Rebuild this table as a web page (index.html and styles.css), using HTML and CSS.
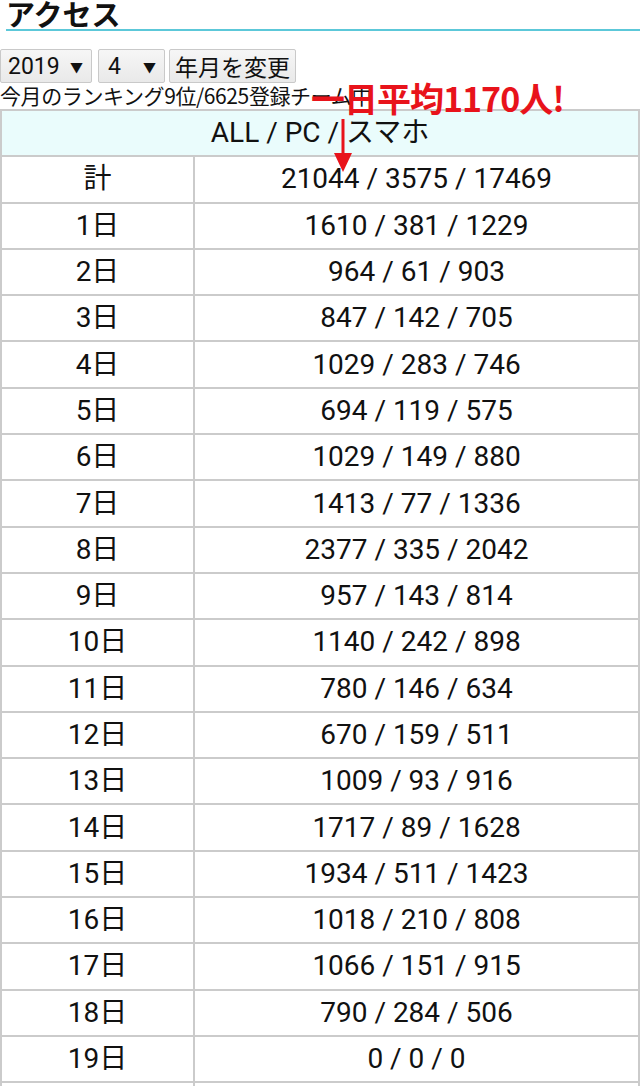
FILE: index.html
```html
<!DOCTYPE html>
<html lang="ja">
<head>
<meta charset="utf-8">
<title>アクセス</title>
<link rel="stylesheet" href="styles.css">
</head>
<body>
<div class="page">
  <h2 class="title">アクセス</h2>
  <form class="controls">
    <div class="sel sel-year"><span>2019</span><span class="arr">▼</span></div>
    <div class="sel sel-month"><span>4</span><span class="arr">▼</span></div>
    <button type="button" class="btn">年月を変更</button>
  </form>
  <div class="rank">今月のランキング9位/6625登録チーム中</div>
  <div class="note">
    <span class="note-text">一日平均1170人!</span>
    <svg class="note-arrow" width="20" height="54" viewBox="0 0 20 54"><rect x="8.5" y="0" width="3" height="38" fill="#e8131b"/><polygon points="1,34 19,34 10,53" fill="#e8131b"/></svg>
  </div>
  <table class="stats">
    <colgroup><col class="c1"><col class="c2"></colgroup>
    <thead><tr><th colspan="2">ALL / PC / スマホ</th></tr></thead>
    <tbody>
      <tr><td>計</td><td>21044 / 3575 / 17469</td></tr>
      <tr><td>1日</td><td>1610 / 381 / 1229</td></tr>
      <tr><td>2日</td><td>964 / 61 / 903</td></tr>
      <tr><td>3日</td><td>847 / 142 / 705</td></tr>
      <tr><td>4日</td><td>1029 / 283 / 746</td></tr>
      <tr><td>5日</td><td>694 / 119 / 575</td></tr>
      <tr><td>6日</td><td>1029 / 149 / 880</td></tr>
      <tr><td>7日</td><td>1413 / 77 / 1336</td></tr>
      <tr><td>8日</td><td>2377 / 335 / 2042</td></tr>
      <tr><td>9日</td><td>957 / 143 / 814</td></tr>
      <tr><td>10日</td><td>1140 / 242 / 898</td></tr>
      <tr><td>11日</td><td>780 / 146 / 634</td></tr>
      <tr><td>12日</td><td>670 / 159 / 511</td></tr>
      <tr><td>13日</td><td>1009 / 93 / 916</td></tr>
      <tr><td>14日</td><td>1717 / 89 / 1628</td></tr>
      <tr><td>15日</td><td>1934 / 511 / 1423</td></tr>
      <tr><td>16日</td><td>1018 / 210 / 808</td></tr>
      <tr><td>17日</td><td>1066 / 151 / 915</td></tr>
      <tr><td>18日</td><td>790 / 284 / 506</td></tr>
      <tr><td>19日</td><td>0 / 0 / 0</td></tr>
      <tr><td>20日</td><td>0 / 0 / 0</td></tr>
    </tbody>
  </table>
</div>
</body>
</html>
```

FILE: styles.css
```css
html, body {
  margin: 0;
  padding: 0;
  background: #fff;
  overflow: hidden;
}
body {
  font-family: Roboto, "Noto Sans CJK JP", sans-serif;
  color: #111;
}
.page {
  position: relative;
  width: 640px;
}
.title {
  margin: -5px 0 0 6px;
  padding: 0;
  font-family: "Noto Sans CJK JP", sans-serif;
  font-weight: 700;
  font-size: 29px;
  line-height: 36px;
  height: 36px;
  border-bottom: 2px solid #5cc8d9;
  box-sizing: border-box;
}
.controls {
  display: flex;
  gap: 5px;
  margin: 18px 0 0 0;
  height: 34px;
}
.sel, .btn {
  display: flex;
  align-items: center;
  box-sizing: border-box;
  height: 34px;
  border: 1px solid #c9c9c9;
  border-radius: 2px;
  background: linear-gradient(#f6f6f6, #e9e9e9);
  font-family: Roboto, "Noto Sans CJK JP", sans-serif;
  font-size: 23px;
  color: #111;
}
.sel-year {
  width: 92px;
  padding-left: 7px;
}
.sel-month {
  width: 67px;
  padding-left: 9px;
  margin-left: 1px;
}
.arr {
  font-size: 13px;
  margin-left: auto;
  margin-right: 8px;
}
.btn {
  width: 127px;
  padding: 0 4px;
  margin-left: -1px;
  font-family: "Noto Sans CJK JP", sans-serif;
  font-size: 23px;
  justify-content: center;
}
.rank {
  font-family: "Noto Sans CJK JP", sans-serif;
  font-size: 21px;
  line-height: 26px;
  height: 26px;
  margin-top: -1px;
  letter-spacing: -0.4px;
  white-space: nowrap;
}
.note {
  position: absolute;
  left: 311px;
  top: 80px;
  display: flex;
  flex-direction: column;
  z-index: 2;
}
.note-text {
  font-family: "Noto Sans CJK JP", sans-serif;
  font-weight: 700;
  font-size: 34px;
  line-height: 46px;
  color: #e8131b;
  letter-spacing: -1px;
  white-space: nowrap;
}
.note-arrow {
  margin-left: 22px;
  margin-top: -2px;
}
.stats {
  width: 640px;
  border-collapse: collapse;
  margin-top: 1px;
  font-size: 28px;
  table-layout: fixed;
}
.c1 { width: 193px; }
.c2 { width: auto; }
.stats th, .stats td {
  border: 2px solid #cbcbcb;
  height: 46.3px;
  box-sizing: border-box;
  padding: 0;
  text-align: center;
  vertical-align: middle;
  font-weight: 400;
  line-height: 30px;
}
.stats th {
  background: #eafcfc;
}
```
